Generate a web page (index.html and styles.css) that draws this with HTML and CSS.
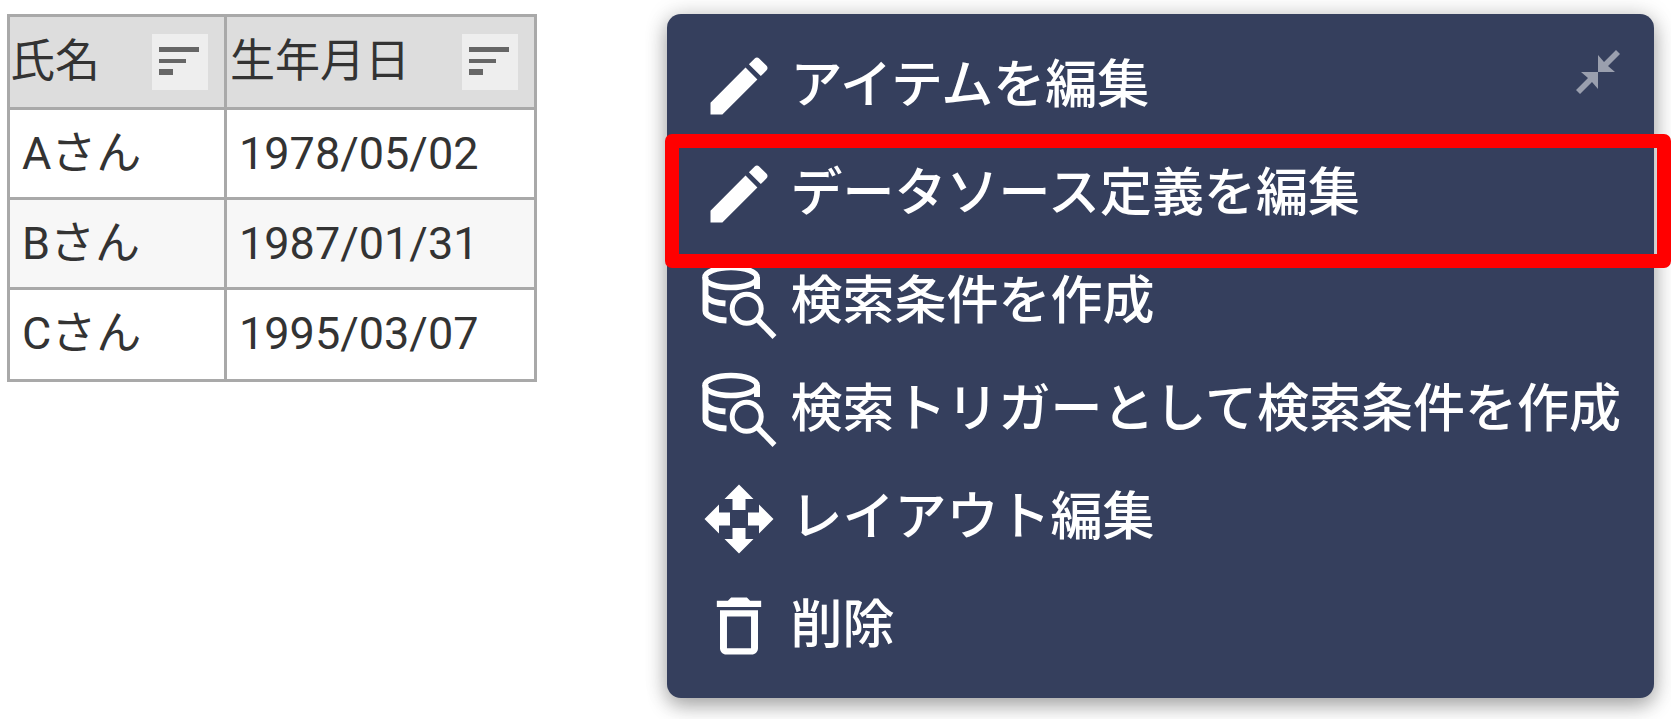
FILE: index.html
```
<!DOCTYPE html>
<html lang="ja">
<head>
<meta charset="utf-8">
<title>データソース定義を編集</title>
<link rel="stylesheet" href="styles.css">
</head>
<body>
<svg class="sprite" aria-hidden="true">
  <symbol id="sort" viewBox="0 0 56 56">
    <path d="M7 13h40v5H7zM7 25h27v4H7zM7 35h14v6H7z"/>
  </symbol>
  <symbol id="pencil" viewBox="0 0 24 24">
    <path d="M3 17.25V21h3.75L17.81 9.94l-3.75-3.75L3 17.25zM20.71 7.04c.39-.39.39-1.02 0-1.41l-2.34-2.34c-.39-.39-1.02-.39-1.41 0l-1.83 1.83 3.75 3.75 1.83-1.83z"/>
  </symbol>
  <symbol id="data-search" viewBox="0 0 76 76">
    <g fill="none" stroke="currentColor" stroke-width="6">
      <ellipse cx="30" cy="13.5" rx="26" ry="10" stroke-width="5.5"/>
      <path d="M4.500 13v34c0 5 10 9 21 9.500M4.500 32c3 4 10 7 20 7.500M56 13v12"/>
      <circle cx="45.700" cy="44.700" r="14.500" stroke-width="5"/>
      <path d="M56.500 55.500L73.500 73" stroke-width="5.500"/>
    </g>
  </symbol>
  <symbol id="move" viewBox="0 0 76 76">
    <path d="M38 4.500l14.500 14.500h-8v11h-13v-11h-8zM38 73.500l14.500-14.500h-8v-11h-13v11h-8zM3.500 39l14.500-14.500v8h11v13h-11v8zM72.500 39l-14.500-14.500v8h-11v13h11v8z"/>
  </symbol>
  <symbol id="trash" viewBox="0 0 24 24">
    <path d="M6 19c0 1.100.9 2 2 2h8c1.100 0 2-.9 2-2V7H6v12zM8.200 9h7.600v10H8.200V9zM15.500 4l-1-1h-5l-1 1H5v2h14V4h-3.500z"/>
  </symbol>
  <symbol id="collapse" viewBox="0 0 44 44">
    <path d="M22 22V5l6 7L40 0l4 4-12 12 7 6zM22 22v17l-6-7L4 44l-4-4 12-12-7-6z"/>
  </symbol>
</svg>
<main class="page">
  <table class="people">
    <thead>
      <tr>
        <th scope="col"><div class="head"><span>氏名</span><button class="sort" type="button" aria-label="氏名で並べ替え"><svg><use href="#sort"/></svg></button></div></th>
        <th scope="col"><div class="head"><span>生年月日</span><button class="sort" type="button" aria-label="生年月日で並べ替え"><svg><use href="#sort"/></svg></button></div></th>
      </tr>
    </thead>
    <tbody>
      <tr><td>Aさん</td><td>1978/05/02</td></tr>
      <tr><td>Bさん</td><td>1987/01/31</td></tr>
      <tr><td>Cさん</td><td>1995/03/07</td></tr>
    </tbody>
  </table>
  <nav class="menu" aria-label="アイテムメニュー">
    <button class="item" type="button"><svg class="icon"><use href="#pencil"/></svg><span class="label">アイテムを編集</span></button>
    <button class="item marked" type="button"><svg class="icon"><use href="#pencil"/></svg><span class="label">データソース定義を編集</span></button>
    <button class="item" type="button"><svg class="icon"><use href="#data-search"/></svg><span class="label">検索条件を作成</span></button>
    <button class="item" type="button"><svg class="icon"><use href="#data-search"/></svg><span class="label">検索トリガーとして検索条件を作成</span></button>
    <button class="item" type="button"><svg class="icon"><use href="#move"/></svg><span class="label">レイアウト編集</span></button>
    <button class="item" type="button"><svg class="icon"><use href="#trash"/></svg><span class="label">削除</span></button>
    <button class="collapse" type="button" aria-label="メニューを縮小"><svg><use href="#collapse"/></svg></button>
  </nav>
</main>
</body>
</html>
```
FILE: styles.css
```
* {
  box-sizing: border-box;
}

body {
  margin: 0;
  background: #fff;
  font-family: Roboto, "Noto Sans CJK JP", sans-serif;
}

button {
  margin: 0;
  padding: 0;
  border: 0;
  background: none;
  color: inherit;
  font: inherit;
  cursor: pointer;
}

svg {
  display: block;
  fill: currentColor;
}

.sprite {
  position: absolute;
  width: 0;
  height: 0;
}

.page {
  display: flex;
  justify-content: space-between;
  align-items: flex-start;
  padding: 14px 17px 21px 7px;
}

.people {
  border-collapse: collapse;
  color: #333;
  font-size: 45px;
  line-height: 60px;
}

.people th,
.people td {
  border: 3px solid #a9a9a9;
  text-align: left;
  font-weight: 400;
  white-space: nowrap;
}

.people th {
  padding: 15px 16px 15px 0;
  background: #ddd;
}

.people th + th {
  padding-left: 3px;
}

.people td {
  padding: 14px 12px 13px;
}

.people tr:last-child td {
  padding-bottom: 15px;
}

.people tr:nth-child(even) td {
  background: #f7f7f7;
}

.head {
  display: flex;
  justify-content: space-between;
  align-items: center;
  gap: 52px;
}

.sort {
  width: 56px;
  height: 56px;
  background: #eee;
  color: #666;
}

.sort svg {
  width: 56px;
  height: 56px;
}

.menu {
  position: relative;
  padding: 18px 0;
  border-radius: 14px;
  background: #353f5d;
  color: #fff;
  box-shadow: 0 8px 20px rgba(0, 0, 0, 0.3), 0 0 24px rgba(0, 0, 0, 0.14);
}

.item {
  position: relative;
  display: flex;
  align-items: center;
  gap: 14px;
  width: 100%;
  height: 108px;
  padding: 0 33px 0 34px;
}

.icon {
  flex: none;
  width: 76px;
  height: 76px;
}

.label {
  font-size: 52px;
  font-weight: 500;
  line-height: 76px;
  white-space: nowrap;
}

.marked::after {
  content: "";
  position: absolute;
  z-index: 1;
  inset: -6px -17px -20px -2px;
  border: 14px solid #f00;
  border-radius: 7px;
}

.collapse {
  position: absolute;
  top: 36px;
  right: 34px;
  color: #9a9fae;
}

.collapse svg {
  width: 44px;
  height: 44px;
}
```
